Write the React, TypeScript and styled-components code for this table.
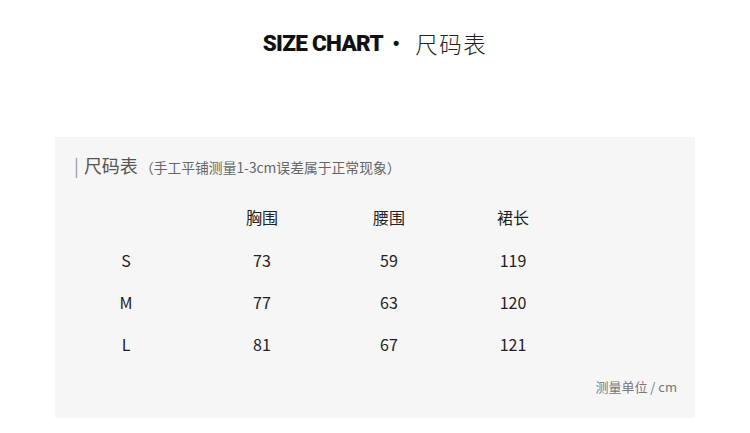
import React from "react";
import styled, { createGlobalStyle } from "styled-components";

const Global = createGlobalStyle`
  html, body { margin: 0; padding: 0; background: #ffffff; }
  body { width: 750px; height: 433px; overflow: hidden; }
`;

const Page = styled.div`
  width: 750px;
  height: 433px;
  display: flex;
  flex-direction: column;
  align-items: center;
  background: #fff;
`;

const Title = styled.h1`
  margin: 28px 0 0;
  height: 30px;
  display: flex;
  align-items: center;
  font-weight: normal;
`;

const TitleEn = styled.span`
  font-family: Roboto, "Liberation Sans", sans-serif;
  font-weight: 900;
  font-size: 22.5px;
  letter-spacing: -0.7px;
  color: #111;
`;

const Dot = styled.span`
  font-family: "Liberation Sans", sans-serif;
  font-size: 18px;
  font-weight: 700;
  color: #111;
  margin: 0 16px 0 10px;
`;

const TitleCn = styled.span`
  font-family: "Noto Sans CJK SC", sans-serif;
  font-weight: 300;
  font-size: 22.5px;
  letter-spacing: 1.5px;
  color: #222;
`;

const Panel = styled.section`
  margin-top: 79px;
  width: 640px;
  height: 281px;
  background: #f6f6f6;
  box-sizing: border-box;
  padding: 15px 18px 0 7px;
  display: flex;
  flex-direction: column;
`;

const Heading = styled.div`
  display: flex;
  align-items: baseline;
  padding-left: 12px;
  height: 24px;
  font-family: "Noto Sans CJK SC", sans-serif;
  color: #555;
`;

const Bar = styled.span`
  font-size: 18px;
  color: #999;
  margin-right: 5px;
`;

const HeadMain = styled.span`
  font-size: 18px;
`;

const HeadNote = styled.span`
  font-size: 13.8px;
  color: #666;
  margin-left: 2px;
`;

const Table = styled.div`
  margin-top: 32px;
  display: grid;
  grid-template-columns: 128px 144px 110px 138px;
  grid-template-rows: 43px 42px 42px 42px;
`;

const Cell = styled.div`
  display: flex;
  align-items: flex-start;
  justify-content: center;
  font-family: "Noto Sans CJK SC", sans-serif;
  font-size: 16px;
  line-height: 18px;
  color: #222;
`;

const Footer = styled.div`
  margin-top: 0;
  align-self: flex-end;
  font-family: "Noto Sans CJK SC", sans-serif;
  font-size: 13px;
  color: #777;
`;

const rows = [
  ["S", "73", "59", "119"],
  ["M", "77", "63", "120"],
  ["L", "81", "67", "121"],
];

export default function App() {
  return (
    <Page>
      <Global />
      <Title>
        <TitleEn>SIZE CHART</TitleEn>
        <Dot>•</Dot>
        <TitleCn>尺码表</TitleCn>
      </Title>
      <Panel>
        <Heading>
          <Bar>|</Bar>
          <HeadMain>尺码表</HeadMain>
          <HeadNote>（手工平铺测量1-3cm误差属于正常现象）</HeadNote>
        </Heading>
        <Table>
          <Cell />
          <Cell>胸围</Cell>
          <Cell>腰围</Cell>
          <Cell>裙长</Cell>
          {rows.map((r) =>
            r.map((v, i) => <Cell key={r[0] + i}>{v}</Cell>)
          )}
        </Table>
        <Footer>测量单位 / cm</Footer>
      </Panel>
    </Page>
  );
}
